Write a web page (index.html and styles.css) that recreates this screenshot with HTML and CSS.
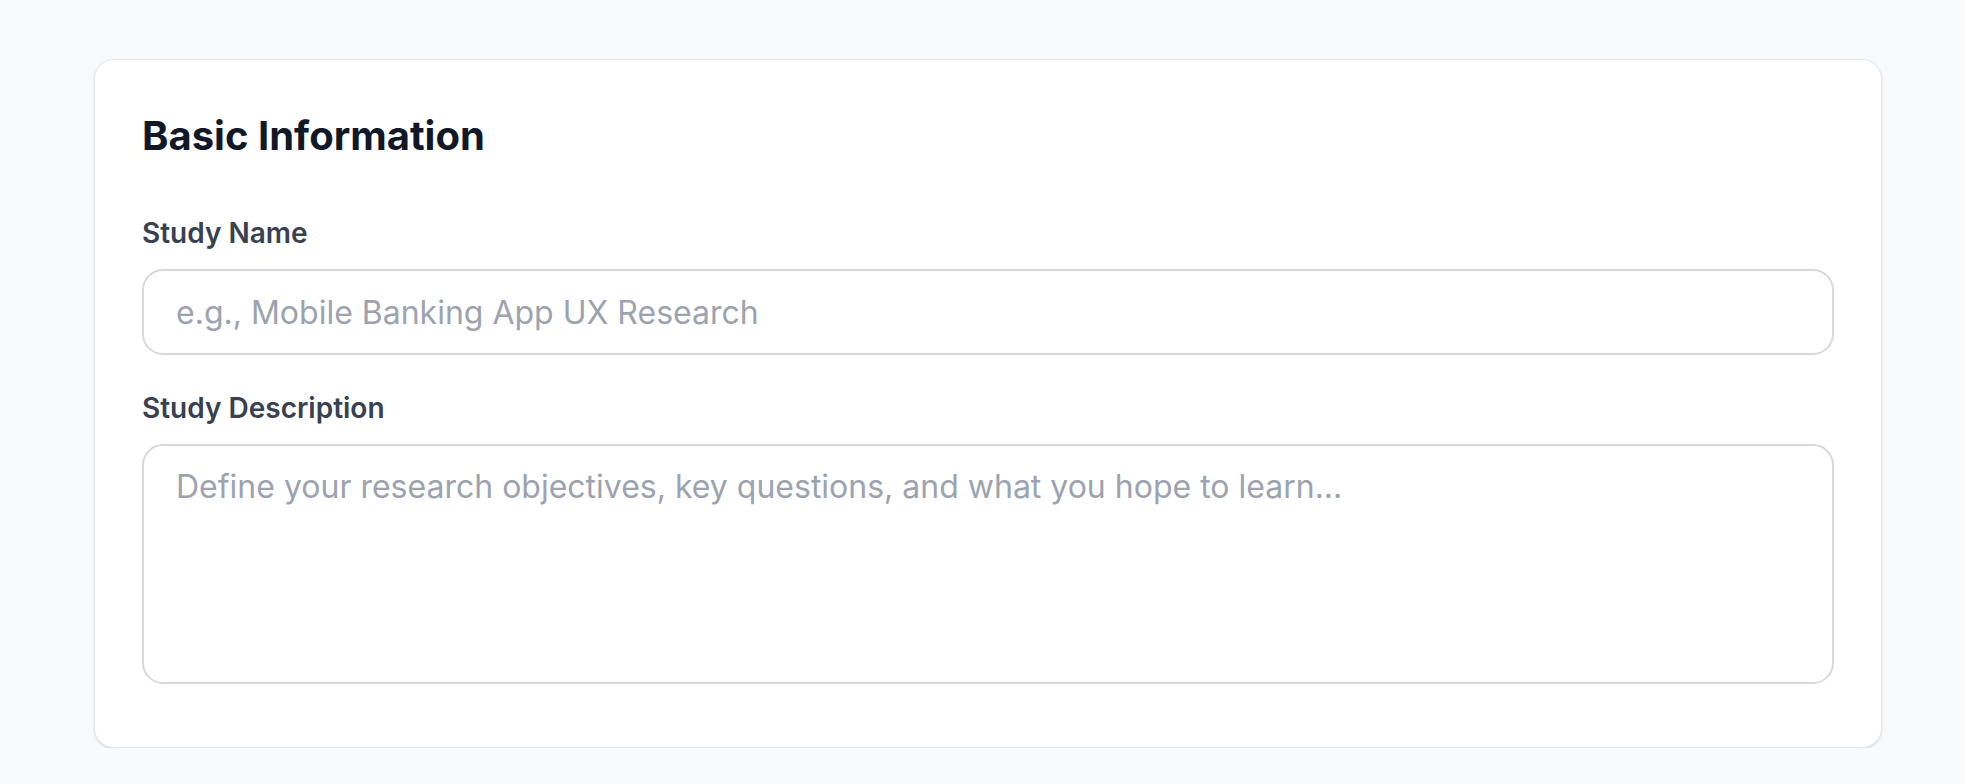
FILE: index.html
```html
<!DOCTYPE html>
<html lang="en">
<head>
<meta charset="utf-8">
<title>Basic Information</title>
<link rel="stylesheet" href="styles.css">
</head>
<body>
<main class="page">
  <section class="card">
    <h2 class="card-title">Basic Information</h2>
    <div class="field">
      <label class="field-label" for="study-name">Study Name</label>
      <input class="text-input" id="study-name" type="text" placeholder="e.g., Mobile Banking App UX Research">
    </div>
    <div class="field">
      <label class="field-label" for="study-desc">Study Description</label>
      <textarea class="text-area" id="study-desc" placeholder="Define your research objectives, key questions, and what you hope to learn..."></textarea>
    </div>
  </section>
</main>
</body>
</html>
```

FILE: styles.css
```css
* { box-sizing: border-box; }

html, body {
  margin: 0;
  padding: 0;
  background: #f9fafb;
  font-family: Inter, "Noto Sans", "Liberation Sans", sans-serif;
}

.page {
  padding: 59px 0 0 94px;
}

.card {
  width: 1788px;
  background: #ffffff;
  border: 1px solid #e5e7eb;
  border-radius: 20px;
  box-shadow: 0 1px 3px rgba(0, 0, 0, 0.1), 0 1px 2px -1px rgba(0, 0, 0, 0.1);
  padding: 52px 47px 63px 47px;
  display: flex;
  flex-direction: column;
}

.card-title {
  margin: 0 0 57px 0;
  font-size: 40px;
  line-height: 48px;
  font-weight: 700;
  color: #111827;
}

.field {
  display: flex;
  flex-direction: column;
  gap: 20px;
}

.field + .field {
  margin-top: 37px;
}

.field-label {
  font-size: 28px;
  line-height: 32px;
  font-weight: 600;
  color: #374151;
}

.text-input,
.text-area {
  width: 100%;
  font-family: inherit;
  font-size: 32px;
  color: #111827;
  background: #ffffff;
  border: 2px solid #d5d8de;
  border-radius: 21px;
  outline: none;
  margin: 0;
}

.text-input {
  height: 86px;
  padding: 0 32px;
}

.text-area {
  height: 240px;
  padding: 21px 32px;
  line-height: normal;
  resize: none;
  display: block;
}

.text-input::placeholder,
.text-area::placeholder {
  color: #9ca3af;
  opacity: 1;
}
```
